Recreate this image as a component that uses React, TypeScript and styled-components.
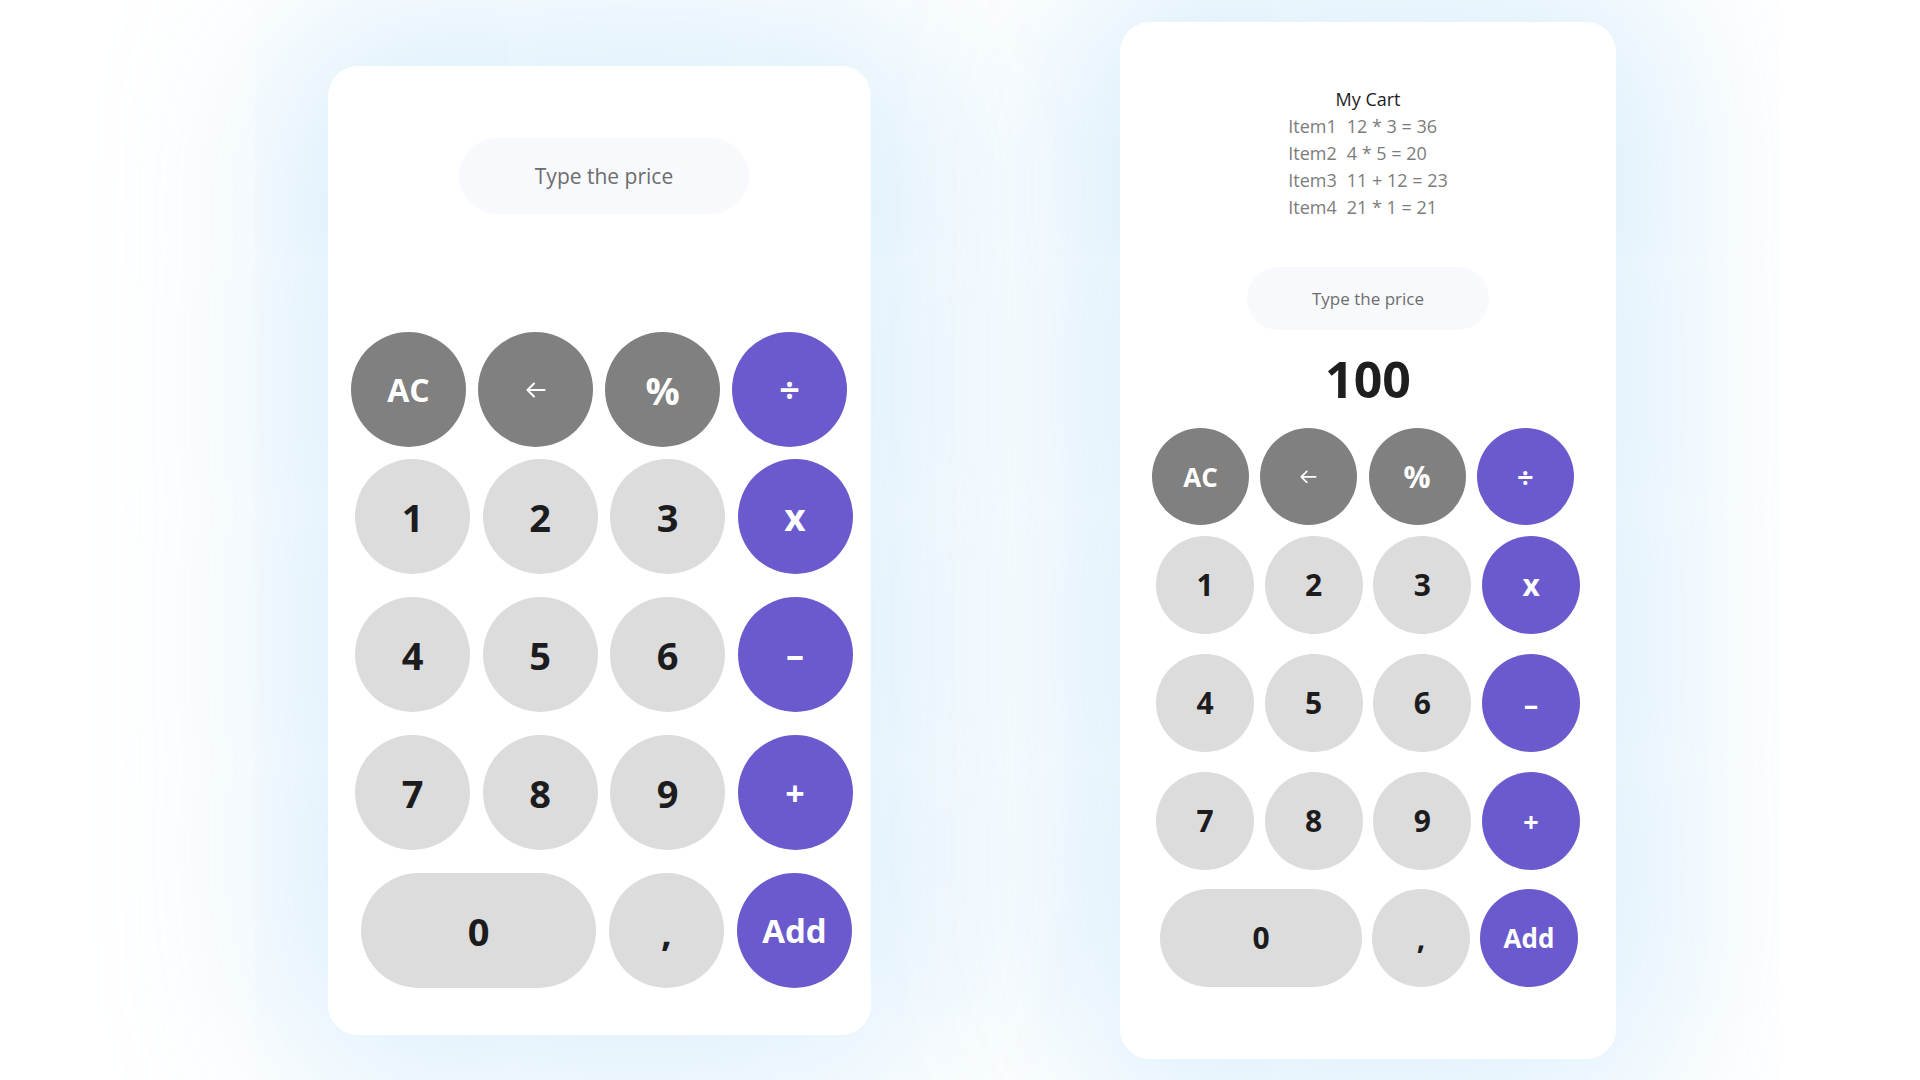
import React from "react";
import styled, { createGlobalStyle, css } from "styled-components";

const Global = createGlobalStyle`
  html, body { margin: 0; padding: 0; background: #ffffff; }
  body { font-family: "Open Sans", "Noto Sans", "Liberation Sans", sans-serif; }
  *, *::before, *::after { box-sizing: border-box; }
`;

type Tone = "dark" | "light" | "accent";

type KeyDef = {
  label: React.ReactNode;
  tone: Tone;
  fs: number;
  weight?: number;
  wide?: boolean;
  arrow?: boolean;
};

type Layout = {
  sizes: number[];
  indents: number[];
  gaps: number[];
  tops: number[];
  zeroWidth: number;
  fontScale: number;
  arrow: number;
};

const Page = styled.main`
  width: 1920px;
  height: 1080px;
  overflow: hidden;
  background: #ffffff;
  display: flex;
  align-items: flex-start;
  gap: 249px;
  padding: 22px 0 0 328px;
`;

const Card = styled.section<{ $w: number; $h: number; $offset: number }>`
  width: ${(p) => p.$w}px;
  height: ${(p) => p.$h}px;
  margin-top: ${(p) => p.$offset}px;
  flex: none;
  background: #ffffff;
  border-radius: 30px;
  box-shadow: 0 0 190px 40px rgba(204, 231, 249, 0.85);
  display: flex;
  flex-direction: column;
  align-items: stretch;
`;

const PriceInput = styled.input<{ $w: number; $h: number; $fs: number; $top: number; $dx: number }>`
  align-self: center;
  width: ${(p) => p.$w}px;
  height: ${(p) => p.$h}px;
  margin-top: ${(p) => p.$top}px;
  margin-left: ${(p) => p.$dx}px;
  border: none;
  outline: none;
  border-radius: 999px;
  background: #f7f9fc;
  text-align: center;
  font-family: "Open Sans", "Noto Sans", sans-serif;
  font-size: ${(p) => p.$fs}px;
  color: #4a4a4a;
  &::placeholder {
    color: #6d6d6d;
    opacity: 1;
  }
`;

const Keypad = styled.div<{ $top: number }>`
  margin-top: ${(p) => p.$top}px;
  display: flex;
  flex-direction: column;
`;

const KeyRow = styled.div<{ $indent: number; $gap: number; $top: number }>`
  display: flex;
  align-items: center;
  gap: ${(p) => p.$gap}px;
  padding-left: ${(p) => p.$indent}px;
  margin-top: ${(p) => p.$top}px;
`;

const toneStyles = {
  dark: css`
    background: #808080;
    color: #ffffff;
  `,
  light: css`
    background: #dcdcdc;
    color: #1c1c1e;
  `,
  accent: css`
    background: #6a5acd;
    color: #ffffff;
  `,
};

const Key = styled.button<{ $tone: Tone; $size: number; $width: number; $fs: number; $weight: number }>`
  flex: none;
  width: ${(p) => p.$width}px;
  height: ${(p) => p.$size}px;
  border: none;
  border-radius: 999px;
  padding: 0;
  display: flex;
  align-items: center;
  justify-content: center;
  font-family: "Open Sans", "Noto Sans", sans-serif;
  font-size: ${(p) => p.$fs}px;
  font-weight: ${(p) => p.$weight};
  line-height: 1;
  cursor: pointer;
  ${(p) => toneStyles[p.$tone]}
`;

const CartBlock = styled.div`
  margin-top: 64px;
  display: flex;
  flex-direction: column;
  align-items: center;
  font-size: 18px;
  line-height: 27px;
`;

const CartTitle = styled.h2`
  margin: 0;
  font-size: 18px;
  line-height: 27px;
  font-weight: 400;
  color: #1d1d1f;
`;

const CartList = styled.ul`
  list-style: none;
  margin: 0;
  padding: 0;
  display: grid;
  grid-template-columns: auto auto;
  column-gap: 10px;
  color: #7c7c7c;
`;

const CartItem = styled.li`
  display: contents;
`;

const Total = styled.div`
  margin-top: 24px;
  text-align: center;
  font-size: 50px;
  line-height: 50px;
  font-weight: 700;
  color: #1e1e1e;
`;

const Arrow = ({ w }: { w: number }) => (
  <svg width={w} height={w * 0.8} viewBox="0 0 20 16" fill="none" stroke="#ffffff" strokeWidth={2} strokeLinecap="round" strokeLinejoin="round">
    <path d="M1.5 8H18.5M8 1.5L1.5 8L8 14.5" />
  </svg>
);

const ROWS: KeyDef[][] = [
  [
    { label: "AC", tone: "dark", fs: 32 },
    { label: "", tone: "dark", fs: 32, arrow: true },
    { label: "%", tone: "dark", fs: 38 },
    { label: "÷", tone: "accent", fs: 36, weight: 700 },
  ],
  [
    { label: "1", tone: "light", fs: 38 },
    { label: "2", tone: "light", fs: 38 },
    { label: "3", tone: "light", fs: 38 },
    { label: "x", tone: "accent", fs: 37 },
  ],
  [
    { label: "4", tone: "light", fs: 38 },
    { label: "5", tone: "light", fs: 38 },
    { label: "6", tone: "light", fs: 38 },
    { label: "–", tone: "accent", fs: 36 },
  ],
  [
    { label: "7", tone: "light", fs: 38 },
    { label: "8", tone: "light", fs: 38 },
    { label: "9", tone: "light", fs: 38 },
    { label: "+", tone: "accent", fs: 34 },
  ],
  [
    { label: "0", tone: "light", fs: 38, wide: true },
    { label: ",", tone: "light", fs: 38 },
    { label: "Add", tone: "accent", fs: 33 },
  ],
];

const Calculator = ({ layout }: { layout: Layout }) => (
  <>
    {ROWS.map((row, r) => (
      <KeyRow key={r} $indent={layout.indents[r]} $gap={layout.gaps[r]} $top={layout.tops[r]}>
        {row.map((k, i) => (
          <Key
            key={i}
            type="button"
            $tone={k.tone}
            $size={layout.sizes[r]}
            $width={k.wide ? layout.zeroWidth : layout.sizes[r]}
            $fs={Math.round(k.fs * layout.fontScale)}
            $weight={k.weight ?? 700}
            aria-label={k.arrow ? "Backspace" : undefined}
          >
            {k.arrow ? <Arrow w={layout.arrow} /> : k.label}
          </Key>
        ))}
      </KeyRow>
    ))}
  </>
);

const LEFT: Layout = {
  sizes: [115, 115, 115, 115, 115],
  indents: [23, 27, 27, 27, 33],
  gaps: [12, 12.5, 12.5, 12.5, 13],
  tops: [0, 12, 23, 23, 23],
  zeroWidth: 235,
  fontScale: 1,
  arrow: 20,
};

const RIGHT: Layout = {
  sizes: [97, 98, 98, 98, 98],
  indents: [32, 36, 36, 36, 40],
  gaps: [11.3, 10.7, 10.7, 10.7, 10],
  tops: [0, 11, 20, 20, 19],
  zeroWidth: 202,
  fontScale: 0.8,
  arrow: 17,
};

const CART = [
  ["Item1", "12 * 3 = 36"],
  ["Item2", "4 * 5 = 20"],
  ["Item3", "11 + 12 = 23"],
  ["Item4", "21 * 1 = 21"],
];

export default function App() {
  return (
    <>
      <Global />
      <Page>
        <Card $w={543} $h={969} $offset={44}>
          <PriceInput $w={290} $h={76} $fs={21} $top={72} $dx={9} placeholder="Type the price" />
          <Keypad $top={118}>
            <Calculator layout={LEFT} />
          </Keypad>
        </Card>
        <Card $w={496} $h={1037} $offset={0}>
          <CartBlock>
            <CartTitle>My Cart</CartTitle>
            <CartList>
              {CART.map(([name, expr]) => (
                <CartItem key={name}>
                  <span>{name}</span>
                  <span>{expr}</span>
                </CartItem>
              ))}
            </CartList>
          </CartBlock>
          <PriceInput $w={242} $h={63} $fs={17} $top={46} $dx={0} placeholder="Type the price" />
          <Total>100</Total>
          <Keypad $top={24}>
            <Calculator layout={RIGHT} />
          </Keypad>
        </Card>
      </Page>
    </>
  );
}
